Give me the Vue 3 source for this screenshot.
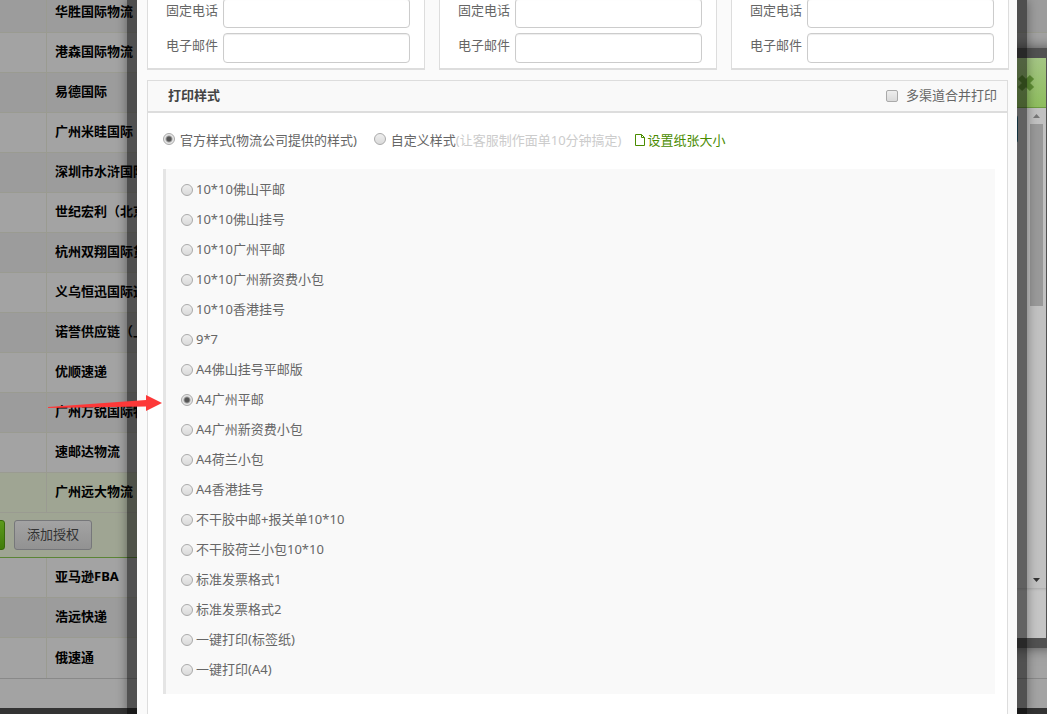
<script setup>
import { ref } from 'vue'

const companies = [
  '华胜国际物流', '港森国际物流', '易德国际', '广州米眭国际', '深圳市水浒国际物流',
  '世纪宏利（北京）', '杭州双翔国际货运', '义乌恒迅国际速递', '诺誉供应链（上海）',
  '优顺速递', '广州万锐国际物流', '速邮达物流',
]
const moreCompanies = ['亚马逊FBA', '浩远快递', '俄速通']
const contacts = ['sender', 'pickup', 'return']
const templates = [
  '10*10佛山平邮', '10*10佛山挂号', '10*10广州平邮', '10*10广州新资费小包',
  '10*10香港挂号', '9*7', 'A4佛山挂号平邮版', 'A4广州平邮', 'A4广州新资费小包',
  'A4荷兰小包', 'A4香港挂号', '不干胶中邮+报关单10*10', '不干胶荷兰小包10*10',
  '标准发票格式1', '标准发票格式2', '一键打印(标签纸)', '一键打印(A4)',
]
const template = ref('A4广州平邮')
const source = ref('official')
const merge = ref(false)
</script>

<template>
  <div class="screen">
    <main class="page">
      <table class="list">
        <tbody>
          <tr v-for="name in companies" :key="name">
            <td class="lead"></td>
            <td class="name">{{ name }}</td>
          </tr>
          <tr class="active">
            <td class="lead"></td>
            <td class="name">广州远大物流</td>
          </tr>
          <tr class="actions">
            <td colspan="2">
              <div class="action-bar">
                <button type="button" class="primary" aria-label="确定"></button>
                <button type="button" class="plain">添加授权</button>
              </div>
            </td>
          </tr>
          <tr v-for="name in moreCompanies" :key="name" class="more">
            <td class="lead"></td>
            <td class="name">{{ name }}</td>
          </tr>
        </tbody>
      </table>
      <div class="page-end"></div>
    </main>

    <section class="back-dialog">
      <header class="back-head">
        <button type="button" class="close" aria-label="关闭">
          <svg width="18" height="18" viewBox="0 0 18 18">
            <path d="M3 3L15 15M15 3L3 15" stroke="#5f8f35" stroke-width="6" />
          </svg>
        </button>
      </header>
      <div class="back-body">
        <div class="back-content"><button type="button" class="teal" aria-label="保存"></button></div>
        <div class="scrollbar">
          <svg width="7" height="4" viewBox="0 0 7 4"><path d="M0 4L3.500 0L7 4Z" fill="#777" /></svg>
          <div class="thumb"></div>
          <svg class="down" width="7" height="4" viewBox="0 0 7 4"><path d="M0 0H7L3.500 4Z" fill="#333" /></svg>
        </div>
      </div>
      <footer class="back-foot"></footer>
    </section>

    <div class="modal">
      <div class="modal-body">
        <div class="cards">
          <div v-for="c in contacts" :key="c" class="card">
            <div class="field">
              <label :for="c + '-phone'">固定电话</label>
              <input :id="c + '-phone'" type="text" />
            </div>
            <div class="field">
              <label :for="c + '-mail'">电子邮件</label>
              <input :id="c + '-mail'" type="text" />
            </div>
          </div>
        </div>

        <section class="print">
          <header class="print-head">
            <h2>打印样式</h2>
            <label class="merge"><input v-model="merge" type="checkbox" /><span>多渠道合并打印</span></label>
          </header>
          <div class="print-body">
            <div class="sources">
              <label><input v-model="source" type="radio" name="source" value="official" /><span>官方样式(物流公司提供的样式)</span></label>
              <label><input v-model="source" type="radio" name="source" value="custom" /><span>自定义样式<em>(让客服制作面单10分钟搞定)</em></span></label>
              <a href="#paper">
                <svg width="10" height="12" viewBox="0 0 10 12" fill="none" stroke="#4a8c00">
                  <path d="M.5 .5H6.500L9.500 3.500V11.500H.5Z" />
                  <path d="M6.500 .5V3.500H9.500" />
                </svg>设置纸张大小</a>
            </div>
            <div class="templates">
              <label v-for="t in templates" :key="t">
                <input v-model="template" type="radio" name="template" :value="t" /><span>{{ t }}</span>
              </label>
            </div>
          </div>
        </section>
      </div>
    </div>

    <svg class="arrow" width="115" height="18" viewBox="0 0 115 18">
      <path d="M0 12L98 5V0L114 8L98 16V11.500L0 13Z" fill="#fd3838" />
    </svg>
  </div>
</template>

<style>
body {
  margin: 0;
  background: #333;
}
</style>

<style scoped>
.screen {
  position: relative;
  height: 100vh;
  overflow: hidden;
  font: 13px/20px "Noto Sans", "Noto Sans CJK SC", sans-serif;
  color: #666;
}
.screen * {
  box-sizing: border-box;
}
button,
input {
  font: inherit;
  margin: 0;
  padding: 0;
}

/* page under the dialogs */
.page {
  margin-top: -7px;
  background: #a3a3a3;
}
.list {
  width: 100%;
  border-spacing: 0;
  table-layout: fixed;
}
.list td {
  height: 40px;
  padding: 0;
  border-bottom: 1px solid #9a9b91;
}
.list tr:nth-child(odd) {
  background: #9c9c9c;
}
.list tr.more {
  background: #a3a3a3;
}
.list tr.more:nth-child(even) {
  background: #9c9c9c;
}
.list tr.active,
.list tr.actions {
  background: #9fa593;
}
.list tr:last-child td {
  border-bottom: 0;
}
.list .lead {
  width: 47px;
  border-right: 1px solid #9a9b91;
}
.list .name {
  padding: 0 0 3px 8px;
  font-weight: bold;
  color: #000;
  white-space: nowrap;
}
.list .actions td {
  height: 45px;
  border-bottom: 1px solid #5b8535;
}
.action-bar {
  display: flex;
  gap: 9px;
}
.action-bar button {
  height: 30px;
  padding-bottom: 2px;
  border-radius: 3px;
}
.primary {
  width: 65px;
  margin-left: -60px;
  border: 1px solid #386a0b;
  background: linear-gradient(#5c9a1c, #417c0a);
}
.plain {
  width: 78px;
  border: 1px solid #76777a;
  background: linear-gradient(#a3a3a3, #929292);
  color: #333;
}
.page-end {
  height: 30px;
  border-top: 1px solid #898989;
}

/* dialog behind the modal */
.back-dialog {
  position: absolute;
  top: 48px;
  right: -9px;
  width: 80%;
  border: 10px solid #515151;
  box-shadow: 0 0 12px rgba(0, 0, 0, 0.5);
}
.back-head {
  display: flex;
  justify-content: flex-end;
  align-items: center;
  height: 50px;
  padding-right: 11px;
  background: linear-gradient(#a4c584, #8ebd5e);
  border-bottom: 1px solid #6d9b41;
}
.close {
  display: flex;
  border: 0;
  background: none;
}
.back-body {
  display: flex;
  height: 480px;
  background: #c1c1c1;
}
.back-content {
  display: flex;
  justify-content: flex-end;
  flex: 1;
  padding: 7px 11px 0 0;
}
.teal {
  width: 80px;
  height: 28px;
  border: 0;
  border-radius: 3px;
  background: #24647c;
}
.scrollbar {
  display: flex;
  flex-direction: column;
  align-items: center;
  width: 17px;
  padding: 6px 2px 6px 0;
}
.thumb {
  width: 13px;
  height: 182px;
  margin-top: 6px;
  background: #999;
}
.down {
  margin-top: auto;
}
.back-foot {
  height: 50px;
  background: #c5c5c5;
  box-shadow: inset 0 3px 3px -2px rgba(0, 0, 0, 0.15);
}

/* modal */
.modal {
  position: absolute;
  inset: 0 20px 0 127px;
  padding: 0 10px;
  background: rgba(0, 0, 0, 0.5);
  box-shadow: 0 0 10px rgba(0, 0, 0, 0.4);
}
.modal-body {
  display: flex;
  flex-direction: column;
  height: 100%;
  padding: 0 8px 0 10px;
  background: #fafafa;
}
.cards {
  display: grid;
  grid-template-columns: repeat(3, 1fr);
  gap: 14px;
  margin-top: -2px;
}
.card {
  display: flex;
  flex-direction: column;
  gap: 5px;
  padding: 0 14px 5px 18px;
  background: #fff;
  border: solid #ddd;
  border-width: 0 1px 2px;
}
.field {
  display: flex;
  gap: 5px;
}
.field label {
  padding-top: 2px;
  white-space: nowrap;
}
.field input {
  flex: 1;
  min-width: 0;
  height: 30px;
  border: 1px solid #ccc;
  border-radius: 4px;
  background: #fff;
  box-shadow: inset 0 1px 1px rgba(0, 0, 0, 0.075);
}
.print {
  flex: 1;
  margin: 10px 1px 0 0;
  background: #fff;
  border: solid #ddd;
  border-width: 1px 1px 0;
}
.print-head {
  display: flex;
  justify-content: space-between;
  align-items: center;
  height: 32px;
  padding: 0 10px 0 20px;
  background: #f9f9f9;
  border-bottom: 2px solid #ddd;
}
.print-head h2 {
  margin: 0;
  padding-bottom: 2px;
  font-size: 13px;
  line-height: 20px;
  color: #444;
}
.merge {
  display: flex;
  align-items: center;
  gap: 8px;
}
.merge span,
.templates span {
  padding-bottom: 2px;
}
input[type="radio"],
input[type="checkbox"] {
  flex: none;
  appearance: none;
  width: 12px;
  height: 12px;
  border: 1px solid #aaa;
  background: linear-gradient(#eee, #dadada);
}
input[type="radio"] {
  border-radius: 50%;
}
input[type="checkbox"] {
  border-radius: 2px;
}
input[type="radio"]:checked {
  background: radial-gradient(circle, #555 0 2px, #e6e6e6 4px);
}
.print-body {
  padding: 17px 12px 0 15px;
}
.sources {
  display: flex;
  align-items: flex-start;
  height: 39px;
}
.sources label {
  display: flex;
  gap: 5px;
  margin-right: 17px;
}
.sources label + label {
  margin-right: 13px;
}
.sources input {
  margin-top: 3px;
}
.sources em {
  font-style: normal;
  color: #ccc;
}
.sources a {
  display: flex;
  align-items: center;
  gap: 3px;
  color: #4a8c00;
  text-decoration: none;
}
.templates {
  padding: 6px 15px 9px;
  background: #f9f9f9;
  border-left: 3px solid #e5e5e5;
}
.templates label {
  display: flex;
  align-items: center;
  gap: 3px;
  height: 30px;
}
.arrow {
  position: absolute;
  left: 48px;
  top: 395px;
}
</style>
